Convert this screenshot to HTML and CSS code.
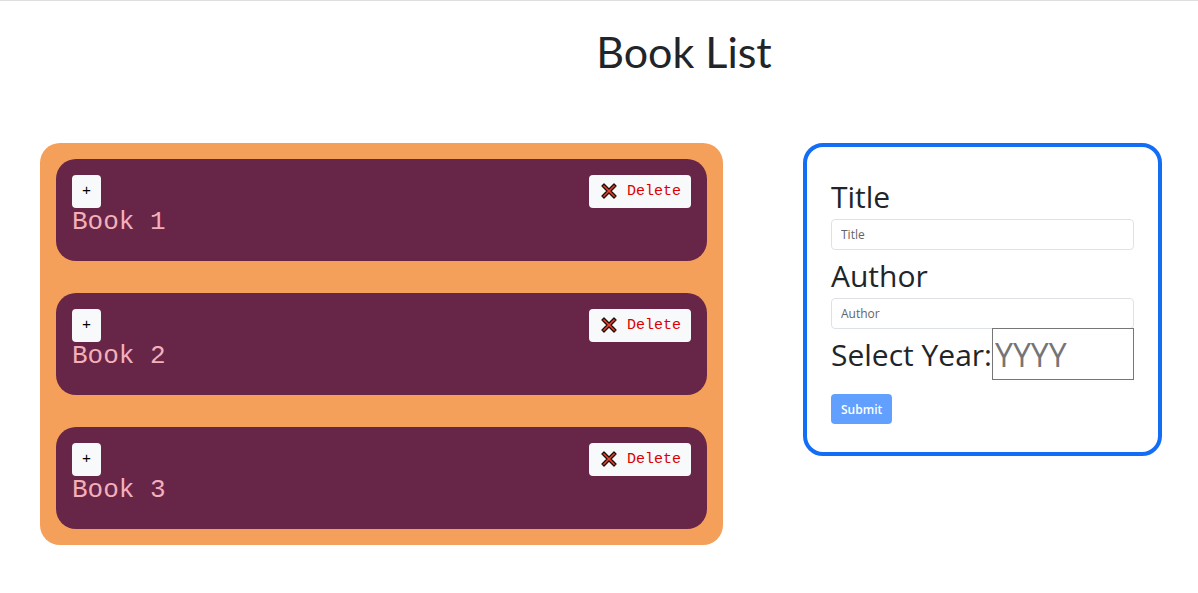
FILE: index.html
```html
<!DOCTYPE html>
<html lang="en">
<head>
<meta charset="utf-8">
<meta name="viewport" content="width=device-width, initial-scale=1">
<title>Book List</title>
<link rel="stylesheet" href="styles.css">
</head>
<body>
<header class="page-header">
  <h1 class="page-title">Book List</h1>
</header>
<main class="layout">
  <ul class="book-list">
    <li class="book">
      <div class="book-actions">
        <button class="btn btn-toggle" type="button">+</button>
        <button class="btn btn-delete" type="button"><svg class="cross" viewBox="0 0 16 18" aria-hidden="true"><path d="M3 1 8 6 13 1 15 3 10 8 15 13 13 15 8 10 3 15 1 13 6 8 1 3Z"/></svg>Delete</button>
      </div>
      <h2 class="book-name">Book 1</h2>
    </li>
    <li class="book">
      <div class="book-actions">
        <button class="btn btn-toggle" type="button">+</button>
        <button class="btn btn-delete" type="button"><svg class="cross" viewBox="0 0 16 18" aria-hidden="true"><path d="M3 1 8 6 13 1 15 3 10 8 15 13 13 15 8 10 3 15 1 13 6 8 1 3Z"/></svg>Delete</button>
      </div>
      <h2 class="book-name">Book 2</h2>
    </li>
    <li class="book">
      <div class="book-actions">
        <button class="btn btn-toggle" type="button">+</button>
        <button class="btn btn-delete" type="button"><svg class="cross" viewBox="0 0 16 18" aria-hidden="true"><path d="M3 1 8 6 13 1 15 3 10 8 15 13 13 15 8 10 3 15 1 13 6 8 1 3Z"/></svg>Delete</button>
      </div>
      <h2 class="book-name">Book 3</h2>
    </li>
  </ul>
  <form class="book-form">
    <label class="form-label" for="title">Title</label>
    <input class="form-input" id="title" type="text" placeholder="Title">
    <label class="form-label" for="author">Author</label>
    <input class="form-input" id="author" type="text" placeholder="Author">
    <div class="year-row">
      <label class="year-label" for="year">Select Year:</label>
      <input class="year-input" id="year" type="text" placeholder="YYYY">
    </div>
    <button class="submit" type="submit" disabled>Submit</button>
  </form>
</main>
</body>
</html>
```
FILE: styles.css
```css
* {
  box-sizing: border-box;
}

body {
  margin: 0;
  border-top: 1px solid #dedede;
  background: #fff;
  color: #212529;
  font-family: "Open Sans", "Noto Sans", sans-serif;
}

.page-header {
  padding: 24px 0 64px 170px;
  text-align: center;
}

.page-title {
  margin: 0;
  font-family: "Gill Sans", Lato, sans-serif;
  font-size: 43px;
  font-weight: 400;
  line-height: 54px;
}

.layout {
  display: grid;
  grid-template-columns: minmax(0, 683fr) minmax(0, 359fr);
  gap: 80px;
  align-items: start;
  padding: 0 36px 40px 40px;
}

.book-list {
  display: grid;
  gap: 32px;
  margin: 0;
  padding: 16px;
  border-radius: 20px;
  background: #f4a05a;
  list-style: none;
  font-family: "Liberation Mono", monospace;
}

.book {
  padding: 16px 16px 24px;
  border-radius: 20px;
  background: #672548;
}

.book-actions {
  display: flex;
  justify-content: space-between;
}

.btn {
  display: flex;
  align-items: center;
  height: 33px;
  padding: 0 10px;
  border: 0;
  border-radius: 4px;
  background: #f8f9fa;
  color: #000;
  font-family: inherit;
  font-size: 15px;
}

.btn-delete {
  gap: 10px;
  padding: 0 10px 0 12px;
  color: #dc0000;
}

.cross {
  width: 16px;
  height: 18px;
  fill: #e8432e;
  stroke: #1b0d08;
  stroke-width: 1.3;
  stroke-linejoin: round;
}

.book-name {
  margin: 0;
  color: #f4b0b8;
  font-size: 26px;
  font-weight: 400;
  line-height: 29px;
}

.book-form {
  padding: 28px 24px;
  border: 4px solid #146ef5;
  border-radius: 20px;
}

.form-label {
  display: block;
  font-size: 30px;
  line-height: 44px;
}

.form-input {
  display: block;
  width: 100%;
  height: 31px;
  margin-bottom: 4px;
  padding: 0 9px;
  border: 1px solid #dee2e6;
  border-radius: 4px;
  font-family: inherit;
  font-size: 12px;
}

.form-input::placeholder {
  color: #5f656b;
}

.year-row {
  display: flex;
  align-items: center;
  margin: -5px 0 14px;
}

.year-label {
  flex: none;
  font-size: 30px;
}

.year-input {
  flex: 1;
  min-width: 0;
  height: 52px;
  padding: 1px 2px;
  border: 1px solid #767676;
  font-family: inherit;
  font-size: 32px;
}

.year-input::placeholder {
  color: #757575;
}

.submit {
  height: 30px;
  padding: 0 10px;
  border: 0;
  border-radius: 4px;
  background: #62a0ff;
  color: #fff;
  font-family: inherit;
  font-size: 12px;
  font-weight: 600;
}
```
